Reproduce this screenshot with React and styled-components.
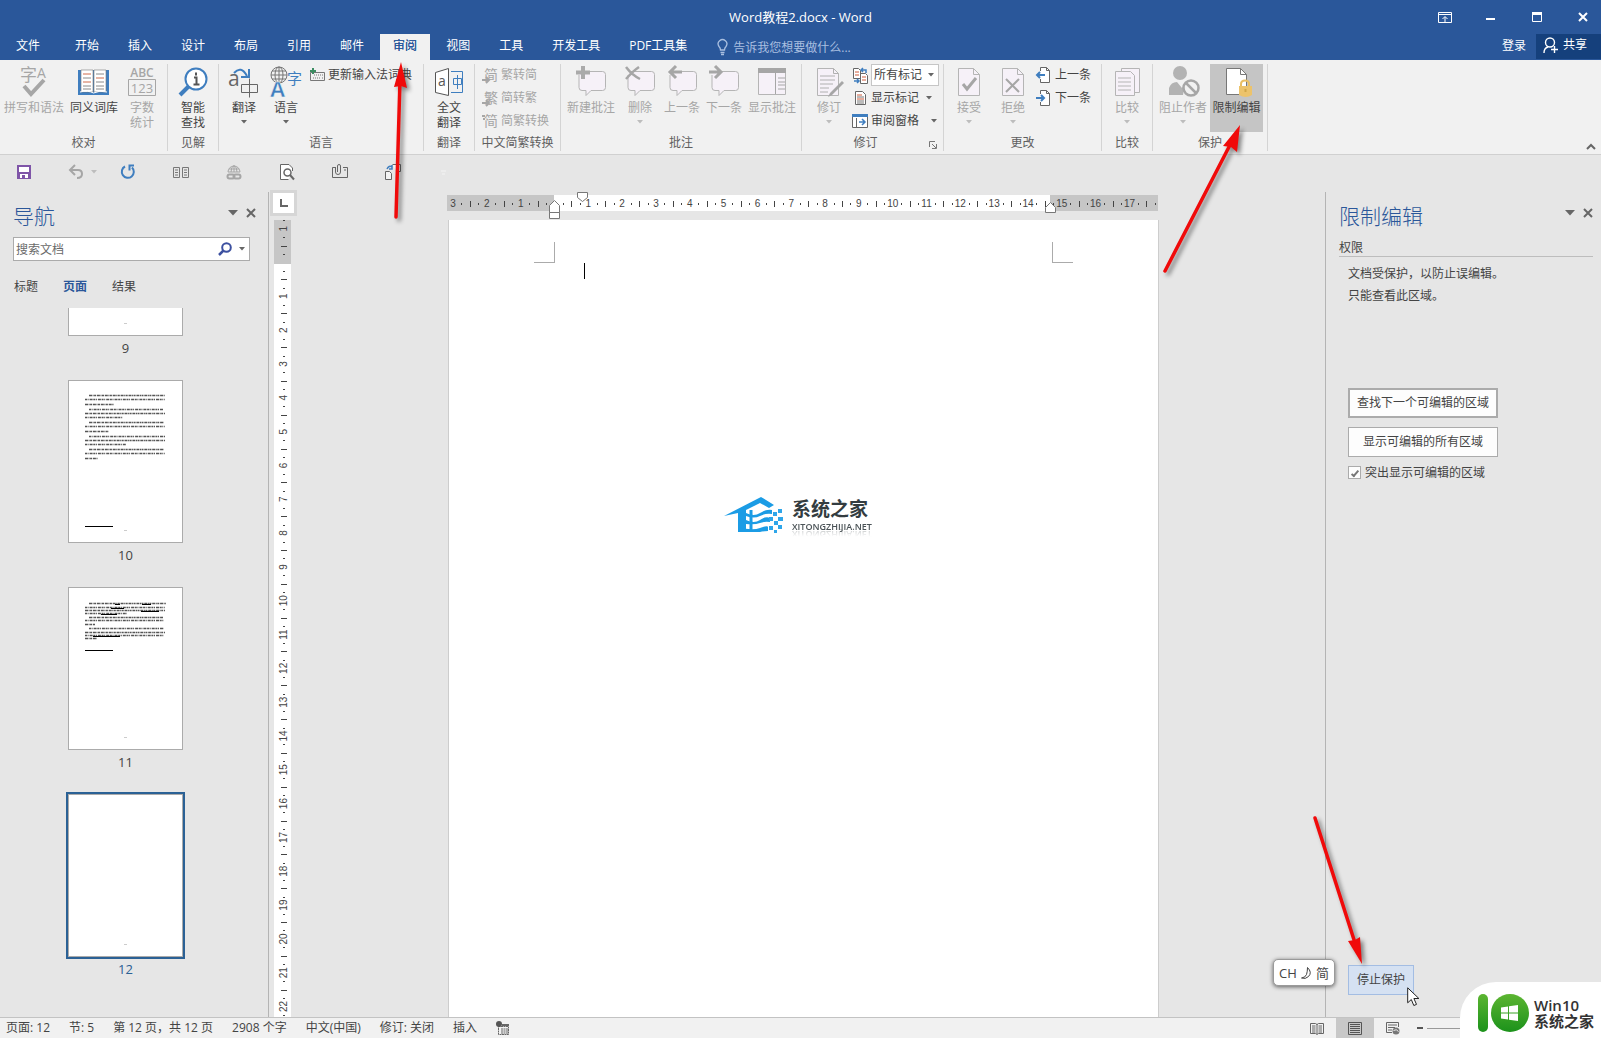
import React from "react";
import styled, { createGlobalStyle, css } from "styled-components";

const Global = createGlobalStyle`
  *, *::before, *::after { box-sizing: border-box; }
  body {
    margin: 0;
    background: #e6e6e6;
    color: #444;
    font: 12px/16px "Open Sans", "Noto Sans CJK SC", sans-serif;
    overflow: hidden;
  }
  button, input, select {
    font: inherit;
    color: inherit;
    margin: 0;
    padding: 0;
    border: 0;
    background: none;
  }
  svg { display: block; flex: none; overflow: visible; }
`;

const BLUE = "#2a579a";
const ACCENT = "#3f7ebf";
const MUTED = "#a6a6a6";

/* ---------- window frame ---------- */

const Window = styled.div`
  position: relative;
  display: flex;
  flex-direction: column;
  height: 100vh;
  overflow: hidden;
`;

const TitleBar = styled.header`
  display: grid;
  grid-template-columns: 1fr auto 1fr;
  align-items: center;
  height: 34px;
  background: ${BLUE};
  color: #fff;
`;

const Title = styled.h1`
  grid-column: 2;
  margin: 0;
  font-size: 13px;
  line-height: 20px;
  font-weight: 400;
`;

const WindowButtons = styled.div`
  display: flex;
  justify-content: flex-end;
  gap: 10px;
`;

const WindowButton = styled.button`
  display: grid;
  place-items: center;
  width: 36px;
  height: 32px;
`;

const TabRow = styled.nav`
  display: flex;
  gap: 3px;
  height: 26px;
  background: ${BLUE};
  color: #fff;
`;

const Tab = styled.button`
  padding: 0 13px 2px;
  white-space: nowrap;
  line-height: 20px;
  ${(p) => p.$file && css`padding: 0 19px 2px 16px;`}
  ${(p) => p.$active && css`
    background: #f1f1f1;
    color: ${BLUE};
    text-shadow: 0 0 0 ${BLUE};
  `}
`;

const TellMe = styled.label`
  display: flex;
  align-items: center;
  gap: 5px;
  flex: 1;
  padding-left: 14px;
  color: #a9bfe0;
  input { width: 200px; height: 22px; }
  input::placeholder { color: #a9bfe0; opacity: 1; }
`;

const SignIn = styled.button`
  padding: 0 7px 2px;
  line-height: 20px;
`;

const Share = styled.button`
  display: flex;
  align-items: center;
  gap: 5px;
  height: 25px;
  padding: 0 14px 3px 7px;
  background: #15407c;
`;

/* ---------- ribbon ---------- */

const Ribbon = styled.section`
  display: flex;
  height: 95px;
  padding-top: 4px;
  background: #f1f1f1;
  border-bottom: 1px solid #d0d0d0;
`;

const Group = styled.div`
  display: flex;
  flex-direction: column;
  height: 87px;
  border-right: 1px solid #d4d4d4;
`;

const GroupBody = styled.div`
  display: flex;
  flex: 1;
  padding: 0 ${(p) => p.$right}px 0 ${(p) => p.$left}px;
`;

const GroupLabel = styled.div`
  display: flex;
  height: 16px;
  line-height: 16px;
  color: #5f5f5f;
  span { flex: 1; text-align: center; white-space: nowrap; }
`;

const BigButton = styled.button`
  display: flex;
  flex-direction: column;
  align-items: center;
  width: ${(p) => p.$w}px;
  height: 68px;
  padding-top: 2px;
  line-height: 15px;
  white-space: nowrap;
  color: ${(p) => (p.disabled ? MUTED : "#444")};
  background: ${(p) => (p.$pressed ? "#c5c5c5" : "none")};
  > svg:first-child { margin-bottom: 2px; }
  > svg:last-child { margin-top: 5px; }
`;

const Stack = styled.div`
  display: flex;
  flex-direction: column;
  gap: 1px;
  padding-left: ${(p) => p.$inset || 0}px;
`;

const SmallButton = styled.button`
  display: flex;
  align-items: center;
  gap: 3px;
  height: 22px;
  white-space: nowrap;
  color: ${(p) => (p.disabled ? MUTED : "#444")};
  > svg:last-child:not(:first-child) { margin-left: ${(p) => p.$arrowGap || 4}px; }
`;

const MarkupRow = styled.label`
  display: flex;
  align-items: center;
  gap: 2px;
  height: 22px;
`;

const SelectBox = styled.span`
  display: flex;
  align-items: center;
  width: 68px;
  height: 22px;
  padding: 0 4px 0 2px;
  background: #fff;
  border: 1px solid #c6c6c6;
  select {
    flex: 1;
    width: 50px;
    appearance: none;
    outline: 0;
  }
`;

const Launcher = styled.button`
  width: 14px;
  padding-top: 4px;
`;

const Collapse = styled.button`
  align-self: flex-end;
  margin: 0 5px 4px auto;
`;

const QuickAccess = styled.div`
  display: flex;
  align-items: center;
  gap: 37px;
  height: 33px;
  padding-left: 16px;
`;

const QuickButton = styled.button`
  display: flex;
  width: 16px;
  height: 16px;
`;

const UndoGroup = styled.div`
  display: flex;
  align-items: center;
  gap: 8px;
  width: 14px;
`;

/* ---------- panes ---------- */

const Main = styled.main`
  display: flex;
  flex: 1;
  min-height: 0;
  padding-top: 4px;
`;

const NavPane = styled.aside`
  display: flex;
  flex-direction: column;
  flex: 0 0 269px;
  padding: 10px 12px 0 13px;
  border-right: 1px solid #b4b4b4;
  overflow: hidden;
`;

const PaneHeader = styled.div`
  display: flex;
  align-items: center;
  height: 28px;
  flex: none;
`;

const PaneTitle = styled.h2`
  flex: 1;
  margin: 0;
  font-size: 21px;
  line-height: 28px;
  font-weight: 300;
  color: #2b579a;
`;

const PaneTools = styled.div`
  display: flex;
  align-items: center;
  gap: 8px;
  padding-bottom: 6px;
`;

const Search = styled.label`
  display: flex;
  align-items: center;
  flex: none;
  gap: 7px;
  height: 24px;
  width: 237px;
  margin-top: 7px;
  padding: 0 4px 0 2px;
  background: #fff;
  border: 1px solid #ababab;
  input { flex: 1; min-width: 0; height: 20px; outline: 0; }
  input::placeholder { color: #6a6a6a; opacity: 1; }
`;

const NavTabs = styled.div`
  display: flex;
  flex: none;
  gap: 25px;
  margin-top: 18px;
  padding-left: 1px;
`;

const NavTab = styled.button`
  height: 16px;
  color: ${(p) => (p.$active ? "#2b579a" : "#444")};
  font-weight: ${(p) => (p.$active ? 700 : 400)};
`;

const Thumbs = styled.ol`
  display: flex;
  flex-direction: column;
  align-items: center;
  gap: 24px;
  width: 225px;
  margin: 13px 0 0;
  padding: 0;
  list-style: none;
`;

const Thumb = styled.li`
  display: flex;
  flex-direction: column;
  align-items: center;
  gap: 4px;
  font-size: 13px;
  color: ${(p) => (p.$selected ? "#2b6195" : "#444")};
`;

const Sheet = styled.div`
  width: 115px;
  height: ${(p) => (p.$cut ? 28 : 163)}px;
  background: #fff;
  border: 1px solid #ababab;
  ${(p) => p.$cut && css`border-top: 0;`}
  ${(p) => p.$selected && css`outline: 2px solid #2b6195;`}
`;

const RulerColumn = styled.div`
  display: flex;
  flex-direction: column;
  align-items: flex-start;
  flex: 0 0 29px;
  gap: 7px;
  padding: 1px 0 0 4px;
  overflow: clip;
  overflow-clip-margin: 4px;
`;

const TabStop = styled.button`
  display: grid;
  place-items: center;
  flex: none;
  width: 21px;
  height: 20px;
  background: #fff;
  box-shadow: 0 0 0 3px #d6d6d6;
`;

const VerticalScale = styled.div`
  flex: 1;
  min-height: 0;
  width: 17px;
  margin-left: 1px;
  background: #fff;
  overflow: hidden;
`;

const Canvas = styled.section`
  display: flex;
  justify-content: center;
  flex: 1;
  min-width: 0;
  padding-right: 16px;
`;

const PageColumn = styled.div`
  display: flex;
  flex-direction: column;
  width: 711px;
`;

const Page = styled.article`
  flex: 1;
  padding-top: 22px;
  background: #fff;
  border: solid #cdcdcd;
  border-width: 0 1px;
`;

const Corners = styled.div`
  display: flex;
  justify-content: space-between;
  padding: 0 85px;
`;

const Corner = styled.i`
  width: 21px;
  height: 21px;
  border-bottom: 1px solid #ababab;
  ${(p) => (p.$right ? css`border-left: 1px solid #ababab;` : css`border-right: 1px solid #ababab;`)}
`;

const Caret = styled.div`
  width: 1px;
  height: 16px;
  margin-left: 135px;
  background: #000;
`;

const Watermark = styled.figure`
  display: flex;
  align-items: flex-start;
  gap: 8px;
  margin: 217px 0 0 275px;
`;

const WatermarkText = styled.figcaption`
  display: flex;
  flex-direction: column;
  gap: 1px;
  strong { font: 700 19px/24px "Noto Sans CJK SC", sans-serif; color: #333c40; }
  small {
    font: 600 9px/11px "Open Sans", sans-serif;
    color: #4b5357;
    -webkit-box-reflect: below -3px linear-gradient(transparent 30%, rgba(0, 0, 0, 0.35));
  }
`;

const RestrictPane = styled.aside`
  display: flex;
  flex-direction: column;
  flex: 0 0 276px;
  padding: 10px 8px 22px 13px;
  border-left: 1px solid #b4b4b4;
`;

const SectionTitle = styled.h3`
  margin: 10px 0 0;
  font-size: 12px;
  line-height: 16px;
  font-weight: 400;
  border-bottom: 1px solid #bdbdbd;
`;

const SectionBody = styled.div`
  display: flex;
  flex-direction: column;
  align-items: flex-start;
  flex: 1;
  padding: 6px 9px 0;
  p { margin: 0; line-height: 22px; }
`;

const PaneActions = styled.div`
  display: flex;
  flex-direction: column;
  gap: 9px;
  margin: 81px 0 auto;
`;

const PaneButton = styled.button`
  width: 150px;
  height: 30px;
  background: #fdfdfd;
  border: ${(p) => (p.$focus ? 2 : 1)}px solid #ababab;
`;

const StopButton = styled.button`
  width: 66px;
  height: 30px;
  background: #d5e1f2;
  border: 1px solid #a3bde3;
`;

const Check = styled.label`
  display: flex;
  align-items: center;
  gap: 4px;
  height: 13px;
  input {
    appearance: none;
    display: grid;
    place-items: center;
    width: 13px;
    height: 13px;
    background: #fdfdfd;
    border: 1px solid #ababab;
  }
  input:checked::after {
    content: "";
    width: 4px;
    height: 8px;
    border: solid #777;
    border-width: 0 2px 2px 0;
    transform: rotate(40deg);
  }
`;

/* ---------- status bar ---------- */

const StatusBar = styled.footer`
  display: flex;
  align-items: center;
  flex: none;
  height: 21px;
  padding: 0 10px 0 6px;
  background: #f1f1f1;
  border-top: 1px solid #c3c3c3;
  white-space: nowrap;
`;

const StatusItems = styled.div`
  display: flex;
  align-items: center;
  flex: 1;
  gap: 19px;
`;

const ViewButton = styled.button`
  display: grid;
  place-items: center;
  width: 38px;
  height: 20px;
  background: ${(p) => (p.$active ? "#c8c8c8" : "none")};
`;

const Zoom = styled.label`
  display: flex;
  align-items: center;
  gap: 4px;
  width: 179px;
  padding-left: 5px;
  input {
    appearance: none;
    width: 120px;
    height: 1px;
    background: #999;
  }
  input::-webkit-slider-thumb {
    appearance: none;
    width: 5px;
    height: 11px;
    background: #666;
  }
`;

/* ---------- floating pieces ---------- */

const Annotations = styled.svg`
  position: absolute;
  inset: 0;
  width: 100%;
  height: 100%;
  pointer-events: none;
  filter: drop-shadow(3px 3px 2px rgba(0, 0, 0, 0.45));
`;

const ImeBar = styled.div`
  position: absolute;
  right: 266px;
  bottom: 52px;
  display: flex;
  align-items: center;
  justify-content: center;
  gap: 4px;
  width: 62px;
  height: 27px;
  font-size: 13px;
  background: #fff;
  border: 1px solid #9a9a9a;
  border-radius: 5px;
  box-shadow: 0 1px 4px rgba(0, 0, 0, 0.6);
`;

const Pointer = styled.svg`
  position: absolute;
  right: 181px;
  bottom: 31px;
`;

const Brand = styled.div`
  position: absolute;
  right: 0;
  bottom: 0;
  display: flex;
  align-items: center;
  gap: 5px;
  width: 141px;
  height: 56px;
  padding: 6px 0 0 17px;
  background: #fff;
  border-top-left-radius: 36px;
  color: #333;
`;

const BrandText = styled.div`
  display: flex;
  flex-direction: column;
  font: 600 15px/16px "Open Sans", "Noto Sans CJK SC", sans-serif;
  white-space: nowrap;
  strong { display: block; font-weight: 600; }
`;

/* ---------- icons ---------- */

const Svg = ({ w = 32, h = w, children, ...rest }) => (
  <svg width={w} height={h} viewBox={`0 0 ${w} ${h}`} fill="none" aria-hidden="true" {...rest}>
    {children}
  </svg>
);

const CJK = '"Noto Sans CJK SC", sans-serif';
const LATIN = '"Open Sans", sans-serif';

const Arrow = ({ muted }) => (
  <Svg w={6} h={4}><path d="M0 0h6L3 3.5z" fill={muted ? "#bdbdbd" : "#666"} /></Svg>
);

const PaneArrow = () => <Svg w={10} h={6}><path d="M0 0h10L5 5.5z" fill="#666" /></Svg>;
const Cross = ({ color = "#666", size = 10 }) => (
  <Svg w={size}><path d={`M1 1l${size - 2} ${size - 2}M${size - 1} 1L1 ${size - 1}`} stroke={color} strokeWidth="2" /></Svg>
);

const SpellIcon = () => (
  <Svg>
    <text x="2" y="15" fontSize="17" fontFamily={CJK} fill={MUTED}>字</text>
    <text x="19" y="12" fontSize="14" fontFamily={LATIN} fill={MUTED}>A</text>
    <path d="M6 20l7 8L26 14" stroke={MUTED} strokeWidth="4" />
  </Svg>
);
const ThesaurusIcon = () => (
  <Svg>
    <path d="M0 4h31v25H0z" fill={ACCENT} />
    <path d="M3 4h12v22H3zM16 4h12v22H16z" fill="#fff" stroke="#777" strokeWidth=".6" />
    <path d="M2 26q8-2 13.500 1q6-3 13.500-1" stroke="#fff" />
    <path d="M5 8h8M5 16h8M18 12h8" stroke="#cf6a4a" />
    <path d="M5 12h8M5 20h8M5 23h8M18 8h8M18 16h8M18 20h8M18 23h8" stroke="#8a8a8a" />
  </Svg>
);
const CountIcon = () => (
  <Svg>
    <text x="16" y="11" fontSize="12" fontWeight="600" textAnchor="middle" fontFamily={LATIN} fill={MUTED}>ABC</text>
    <path d="M2.500 13.500h27v16h-27z" stroke={MUTED} />
    <text x="16" y="27" fontSize="13" textAnchor="middle" fontFamily={LATIN} fill={MUTED}>123</text>
  </Svg>
);
const SmartIcon = () => (
  <Svg>
    <circle cx="19" cy="13" r="10.500" fill="#fff" stroke={ACCENT} strokeWidth="2" />
    <path d="M11.500 20.500L3 29" stroke={ACCENT} strokeWidth="4" />
    <path d="M19 6.500v3M17 11.500h2.500V18M16.500 18.500h6" stroke="#555" strokeWidth="2" />
  </Svg>
);
const TranslateIcon = () => (
  <Svg>
    <text x="0" y="20" fontSize="21" fontFamily={LATIN} fill="#666">a</text>
    <path d="M13.500 18.500h16v8h-16zM21.500 12.500v19" stroke="#666" />
    <path d="M6 7q7-8 13 3" stroke={ACCENT} strokeWidth="2" />
    <path d="M21 3v8h-8" stroke={ACCENT} strokeWidth="2" />
  </Svg>
);
const LanguageIcon = () => (
  <Svg>
    <g stroke="#777"><circle cx="9" cy="9" r="8" /><ellipse cx="9" cy="9" rx="4" ry="8" /><path d="M1 9h16M2 5h14M2 13h14M9 1v16" /></g>
    <text x="17" y="18" fontSize="15" fontFamily={CJK} fill={ACCENT}>字</text>
    <text x="0" y="31" fontSize="22" fontWeight="700" fontFamily={LATIN} fill={ACCENT} stroke="#f1f1f1" strokeWidth=".6">A</text>
  </Svg>
);
const FullTranslateIcon = () => (
  <Svg>
    <path d="M2.500 6.500L15.500 2.500v27L2.500 26.500z" stroke="#555" fill="#fff" />
    <text x="5" y="20" fontSize="14" fontFamily={LATIN} fill="#555">a</text>
    <path d="M18 5.500h11.500v21H18M20.500 12.500h8v6h-8zM24.500 9v14" stroke={ACCENT} />
  </Svg>
);
const bubble = "M5.500 5.500h22q3 0 3 3v13q0 3-3 3H16l-5 5v-5H7q-3 0-3-3V9";
const CommentIcon = ({ kind }) => (
  <Svg>
    <path d={bubble} stroke="#b5b5b5" fill="#f6f1f8" />
    {kind === "new" && <path d="M8 0v13M1 6.500h14" stroke="#aaa" strokeWidth="4" />}
    {kind === "delete" && <path d="M2 1q6 8 14 12M15 1Q9 5 2 13" stroke={MUTED} strokeWidth="2.500" />}
    {kind === "prev" && <path d="M16 6H5M10 0L4 6l6 6" stroke={MUTED} strokeWidth="3" />}
    {kind === "next" && <path d="M1 6h11M7 0l6 6-6 6" stroke={MUTED} strokeWidth="3" />}
  </Svg>
);
const ShowCommentsIcon = () => (
  <Svg>
    <path d="M2.500 2.500h27v26h-27z" stroke="#b5b5b5" fill="#f6f1f8" />
    <path d="M2 2h28v5H2z" fill={MUTED} />
    <path d="M19.500 7v21M22 12h7M22 16h7M22 19h7M22 23h7" stroke={MUTED} />
  </Svg>
);
const TrackIcon = () => (
  <Svg>
    <path d="M4.500 2.500h16l5 5v22h-21z" fill="#f6f1f8" stroke="#b5b5b5" />
    <path d="M20.500 2.500v5h5M7 10h15M7 14h15M7 18h13M7 22h9M7 26h8" stroke="#b0b0b0" />
    <path d="M29 15L17 27l-2 4 4-2 12-12z" fill={MUTED} />
  </Svg>
);
const DecisionIcon = ({ no }) => (
  <Svg>
    <path d="M5.500 2.500h15l6 6v21h-21z" fill="#f6f1f8" stroke="#b5b5b5" />
    <path d="M20.500 2.500v6h6" stroke="#b5b5b5" />
    {no ? <path d="M9 13l13 13M22 13L9 26" stroke={MUTED} strokeWidth="2" /> : <path d="M10 18l4 5 9-11" stroke={MUTED} strokeWidth="3" />}
  </Svg>
);
const CompareIcon = () => (
  <Svg>
    <path d="M10.500 2.500h18v24h-18z" stroke="#b5b5b5" fill="#f6f1f8" />
    <path d="M4.500 5.500h15l4 4v20h-19z" stroke="#b5b5b5" fill="#f6f1f8" />
    <path d="M7 12h13M7 16h13M7 20h13M7 24h13" stroke="#b5b5b5" />
  </Svg>
);
const BlockIcon = () => (
  <Svg>
    <circle cx="13" cy="7" r="7" fill="#b3b3b3" />
    <path d="M2 29V22q2-6 8-6l5 6 3-5-2 12z" fill="#b3b3b3" />
    <circle cx="24" cy="22" r="7.500" fill="#f1f1f1" stroke={MUTED} strokeWidth="2.500" />
    <path d="M19 17l10 10" stroke={MUTED} strokeWidth="2.500" />
  </Svg>
);
const RestrictIcon = () => (
  <Svg>
    <path d="M5.500 2.500h14l6 6v20h-20z" fill="#fff" stroke="#777" />
    <path d="M19.500 2.500v6h6" stroke="#777" />
    <path d="M20 22v-4q0-3.500 4-3.500t4 3.500v4" stroke="#e8be63" strokeWidth="2" />
    <path d="M18 20h13v9q-6 4-13 0z" fill="#ecc36b" />
    <path d="M24.500 23v3" stroke="#d0a64a" strokeWidth="2" />
  </Svg>
);

const KeyboardIcon = () => (
  <Svg w={16}>
    <path d="M1.500 5.500h14v8h-14z" stroke="#777" />
    <path d="M5 8h9M4 11h1M6 11h6M13 11h1" stroke="#777" strokeDasharray="1 1" />
    <path d="M4 1v6M1 4h6" stroke="#3c8d62" strokeWidth="2" />
  </Svg>
);
const ConvertIcon = ({ glyph, kind }) => (
  <Svg w={16}>
    <text x="2" y="13" fontSize="14" fontFamily={CJK} fill={MUTED}>{glyph}</text>
    {kind === "both" ? <path d="M0 3h3M1 6h2" stroke={MUTED} strokeWidth="2" /> : <path d="M0 13h6M4 10l3 3-3 3" stroke={MUTED} strokeWidth="2" />}
  </Svg>
);
const MarkupIcon = () => (
  <Svg w={17}>
    <path d="M1.500 1.500h5l2 2v8h-7zM8.500 6.500h5l2 2v8h-7z" fill="#fff" stroke="#666" />
    <path d="M3 5h4M3 8h4M10 10h4M10 13h4" stroke="#cf5a3a" />
    <path d="M10 3h4v3M2 14h4M11 1L9 3l2 2M5 12l2 2-2 2" stroke={ACCENT} strokeWidth="1.500" />
  </Svg>
);
const ShowMarkupIcon = () => (
  <Svg w={16}>
    <path d="M3.500 1.500h7l3 3v10h-10z" fill="#fff" stroke="#666" />
    <path d="M5 5h5M5 9h7" stroke="#cf5a3a" />
    <path d="M5 7h7M5 11h7M5 13h7" stroke="#777" />
  </Svg>
);
const PaneIcon = () => (
  <Svg w={16}>
    <path d="M.5 1.500h15v13H.5z" fill="#fff" stroke="#666" />
    <path d="M0 1h16v3H0z" fill={ACCENT} />
    <path d="M4.500 5v9" stroke="#666" />
    <path d="M7 9h6M10 6l3 3-3 3" stroke={ACCENT} strokeWidth="1.500" />
  </Svg>
);
const StepIcon = ({ next }) => (
  <Svg w={16}>
    <path d="M4.500 4V.5h6l3 3v12h-9V12" fill="#fff" stroke="#666" />
    <path d="M10.500.5v3h3" stroke="#666" />
    {next ? <path d="M0 8h7M5 5l3 3-3 3" stroke={ACCENT} strokeWidth="2" /> : <path d="M9 8H2M4 5L1 8l3 3" stroke={ACCENT} strokeWidth="2" />}
  </Svg>
);

/* ---------- rulers ---------- */

const STEP = 33.82;

function scaleMarks(from, to, zero) {
  const marks = [];
  for (let q = Math.ceil((from - zero) / (STEP / 4)); zero + (q * STEP) / 4 < to; q += 1) {
    if (q === 0) continue;
    const at = zero + (q * STEP) / 4;
    const kind = q % 4 === 0 ? "number" : q % 2 === 0 ? "bar" : "dot";
    marks.push({ at, kind, value: Math.abs(q / 4) });
  }
  return marks;
}

const RULER_TEXT = { fontSize: 10, fontFamily: '"Liberation Sans", sans-serif', fill: "#444", textAnchor: "middle" };

const HorizontalRuler = () => (
  <Svg w={711} h={28}>
    <path d="M-1 3h711v16H-1z" fill="#fff" />
    <path d="M-1 3h107v16H-1zM602 3h108v16H602z" fill="#c6c6c6" />
    {scaleMarks(2, 709, 106.500).map(({ at, kind, value }) =>
      kind === "number" ? (
        <text key={at} x={at} y="15" {...RULER_TEXT}>{value}</text>
      ) : (
        <path key={at} d={kind === "bar" ? `M${Math.round(at)}.5 9v6` : `M${Math.round(at)}.5 11v2`} stroke="#444" />
      )
    )}
    <g fill="#fff" stroke="#777">
      <path d="M129.500.5h10v5l-5 4-5-4z" />
      <path d="M101.500 20.500v-7l5-5 5 5v7zM101.500 20.500h10v6h-10z" />
      <path d="M597.500 20.500v-5l5-5 5 5v5z" />
    </g>
  </Svg>
);

const VerticalRuler = () => (
  <Svg w={17} h={2000}>
    <path d="M0 0h17v44H0z" fill="#c6c6c6" />
    {scaleMarks(0, 2000, 42.500).map(({ at, kind, value }) =>
      kind === "number" ? (
        <text key={at} transform={`translate(13 ${at}) rotate(-90)`} {...RULER_TEXT}>{value}</text>
      ) : (
        <path key={at} d={kind === "bar" ? `M7 ${Math.round(at)}.5h6` : `M9 ${Math.round(at)}.5h2`} stroke="#444" />
      )
    )}
  </Svg>
);

/* ---------- thumbnails ---------- */

const THUMB_LINES = {
  10: [[20, 14, 76], [16, 18, 80], [16, 23, 29], [20, 28, 74], [16, 32, 80], [16, 36, 38], [20, 41, 75], [16, 45, 80], [16, 50, 24], [20, 55, 76], [16, 59, 80], [16, 63, 41], [20, 68, 75], [16, 72, 80], [16, 77, 13]],
  11: [[20, 15, 77], [16, 19, 80], [16, 22, 80], [16, 25, 42], [20, 29, 74], [16, 32, 79], [16, 36, 10], [20, 40, 75], [16, 44, 80], [16, 47, 79], [16, 50, 12]],
};

const ThumbDrawing = ({ page }) => (
  <Svg w={113} h={page === 9 ? 27 : 161}>
    {(THUMB_LINES[page] || []).map(([x, y, w], i) => (
      <path key={y} d={`M${x} ${y}.5h${w}`} stroke="#555" strokeWidth="1.500" strokeDasharray={i % 2 ? "2 .6 1 1 3 .7" : "3 .6 1 .5 2 .8"} />
    ))}
    {page === 10 && <path d="M16 145.500h28" stroke="#000" />}
    {page === 11 && <path d="M16 62.500h28M46 16.500h5M73 16.500h9M42 20.500h13M72 23.500h18M32 26.500h16M24 48.500h27" stroke="#000" />}
    <path d={`M55 ${page === 9 ? 15 : 149}.5h3`} stroke="#ccc" />
  </Svg>
);

/* ---------- composition ---------- */

const Big = ({ icon, lines, w, arrow, disabled, pressed }) => (
  <BigButton $w={w} disabled={disabled} $pressed={pressed}>
    {icon}
    {lines.map((line) => <span key={line}>{line}</span>)}
    {arrow && <Arrow muted={disabled} />}
  </BigButton>
);

const RibbonGroup = ({ label, left = 0, right = 0, launcher, children }) => (
  <Group>
    <GroupBody $left={left} $right={right}>{children}</GroupBody>
    <GroupLabel>
      <span>{label}</span>
      {launcher && (
        <Launcher aria-label="修订选项">
          <Svg w={8}><path d="M.5 6V.5H6M3 3l4 4M7.500 3v4.500H3" stroke="#777" /></Svg>
        </Launcher>
      )}
    </GroupLabel>
  </Group>
);

const TABS = ["文件", "开始", "插入", "设计", "布局", "引用", "邮件", "审阅", "视图", "工具", "开发工具", "PDF工具集"];
const STATUS = ["页面: 12", "节: 5", "第 12 页，共 12 页", "2908 个字", "中文(中国)", "修订: 关闭", "插入"];

const QUICK = [
  ["自动恢复", <path key="r" d="M5 2.500A6 6 0 1 0 12 3.500M14 1.500H9.500v5" stroke={ACCENT} strokeWidth="2" />],
  ["阅读", <path key="b" d="M.5 3.500h6v10h-6zM9.500 3.500h6v10h-6zM2 6h3M2 8.500h3M2 11h3M11 6h3M11 8.500h3M11 11h3" stroke="#777" />],
  ["超链接", <g key="l" stroke={MUTED}><path d="M2 8a6 6 0 0 1 12 0zM8 1.500V8M5 8q0-5 3-6.500Q11 3 11 8M3 5h10" /><rect x="1.500" y="10.500" width="7" height="4" rx="2" strokeWidth="2" /><rect x="7.500" y="10.500" width="7" height="4" rx="2" strokeWidth="2" /></g>],
  ["打印预览", <g key="p" stroke="#666"><path d="M13.500 7V4L10 .5H1.500v15h8" fill="#fff" /><circle cx="8.500" cy="8.500" r="3.500" strokeWidth="1.500" /><path d="M11 11l4 4.500" strokeWidth="2" /></g>],
  ["附件", <g key="a" stroke="#666"><path d="M3 3.500H.5v10h15v-10H11M12 6h2" /><path d="M3.500 3v5a2 2 0 0 0 5 0V2a1.500 1.500 0 0 0-3 0v6" /></g>],
  ["转换", <g key="t"><path d="M.5 7.500h4l2 2v6h-6zM7.500.5h8v7h-4" stroke="#666" fill="#f4f4f4" /><path d="M2 5q2-4 5-2M7 1v4H4" stroke={ACCENT} strokeWidth="1.500" /></g>],
];

export default function App() {
  return (
    <Window>
      <Global />
      <TitleBar>
        <Title>Word教程2.docx - Word</Title>
        <WindowButtons>
          <WindowButton aria-label="功能区显示选项"><Svg w={14} h={11}><path d="M.5.5h13v10H.5zM1 2.500h12M7 10V5M4.500 7L7 4.500 9.500 7" stroke="#fff" /></Svg></WindowButton>
          <WindowButton aria-label="最小化"><Svg w={10}><path d="M0 7h9" stroke="#fff" strokeWidth="2" /></Svg></WindowButton>
          <WindowButton aria-label="最大化"><Svg w={10}><path d="M.5 1.500h9v8h-9zM0 1h10" stroke="#fff" /><path d="M0 0h10v3H0z" fill="#fff" /></Svg></WindowButton>
          <WindowButton aria-label="关闭"><Cross color="#fff" /></WindowButton>
        </WindowButtons>
      </TitleBar>

      <TabRow>
        {TABS.map((tab, i) => <Tab key={tab} $file={i === 0} $active={tab === "审阅"}>{tab}</Tab>)}
        <TellMe>
          <Svg w={11} h={16}><path d="M3.500 11q0-2-1.500-3.500a4.300 4.300 0 1 1 7 0Q7.500 9 7.500 11zM3.500 13.500h4M4 15.500h3" stroke="#a9bfe0" strokeWidth="1.300" /></Svg>
          <input aria-label="告诉我" placeholder="告诉我您想要做什么..." />
        </TellMe>
        <SignIn>登录</SignIn>
        <Share>
          <Svg w={15} h={17}><circle cx="7" cy="5.500" r="4.500" stroke="#fff" strokeWidth="1.400" /><path d="M1 16q0-5 4-6M8 12.500h7M11.500 9v7" stroke="#fff" strokeWidth="1.400" /></Svg>
          共享
        </Share>
      </TabRow>

      <Ribbon>
        <RibbonGroup label="校对" left={2} right={5}>
          <Big icon={<SpellIcon />} lines={["拼写和语法"]} w={64} disabled />
          <Big icon={<ThesaurusIcon />} lines={["同义词库"]} w={56} />
          <Big icon={<CountIcon />} lines={["字数", "统计"]} w={40} disabled />
        </RibbonGroup>
        <RibbonGroup label="见解">
          <Big icon={<SmartIcon />} lines={["智能", "查找"]} w={50} />
        </RibbonGroup>
        <RibbonGroup label="语言" left={4} right={11}>
          <Big icon={<TranslateIcon />} lines={["翻译"]} w={42} arrow />
          <Big icon={<LanguageIcon />} lines={["语言"]} w={42} arrow />
          <Stack $inset={2}>
            <SmallButton><KeyboardIcon />更新输入法词典</SmallButton>
          </Stack>
        </RibbonGroup>
        <RibbonGroup label="翻译">
          <Big icon={<FullTranslateIcon />} lines={["全文", "翻译"]} w={50} />
        </RibbonGroup>
        <RibbonGroup label="中文简繁转换" left={7} right={11}>
          <Stack>
            <SmallButton disabled><ConvertIcon glyph="简" />繁转简</SmallButton>
            <SmallButton disabled><ConvertIcon glyph="繁" />简转繁</SmallButton>
            <SmallButton disabled><ConvertIcon glyph="简" kind="both" />简繁转换</SmallButton>
          </Stack>
        </RibbonGroup>
        <RibbonGroup label="批注" left={2} right={2}>
          <Big icon={<CommentIcon kind="new" />} lines={["新建批注"]} w={56} disabled />
          <Big icon={<CommentIcon kind="delete" />} lines={["删除"]} w={42} arrow disabled />
          <Big icon={<CommentIcon kind="prev" />} lines={["上一条"]} w={42} disabled />
          <Big icon={<CommentIcon kind="next" />} lines={["下一条"]} w={42} disabled />
          <Big icon={<ShowCommentsIcon />} lines={["显示批注"]} w={54} disabled />
        </RibbonGroup>
        <RibbonGroup label="修订" left={4} right={4} launcher>
          <Big icon={<TrackIcon />} lines={["修订"]} w={46} arrow disabled />
          <Stack>
            <MarkupRow>
              <MarkupIcon />
              <SelectBox>
                <select aria-label="显示以供审阅"><option>所有标记</option></select>
                <Arrow />
              </SelectBox>
            </MarkupRow>
            <SmallButton><ShowMarkupIcon />显示标记<Arrow /></SmallButton>
            <SmallButton $arrowGap={9}><PaneIcon />审阅窗格<Arrow /></SmallButton>
          </Stack>
        </RibbonGroup>
        <RibbonGroup label="更改" left={4} right={10}>
          <Big icon={<DecisionIcon />} lines={["接受"]} w={42} arrow disabled />
          <Big icon={<DecisionIcon no />} lines={["拒绝"]} w={46} arrow disabled />
          <Stack>
            <SmallButton><StepIcon />上一条</SmallButton>
            <SmallButton><StepIcon next />下一条</SmallButton>
          </Stack>
        </RibbonGroup>
        <RibbonGroup label="比较">
          <Big icon={<CompareIcon />} lines={["比较"]} w={50} arrow disabled />
        </RibbonGroup>
        <RibbonGroup label="保护" left={3} right={4}>
          <Big icon={<BlockIcon />} lines={["阻止作者"]} w={54} arrow disabled />
          <Big icon={<RestrictIcon />} lines={["限制编辑"]} w={53} pressed />
        </RibbonGroup>
        <Collapse aria-label="折叠功能区"><Svg w={10} h={7}><path d="M1 6l4-4 4 4" stroke="#666" strokeWidth="2" /></Svg></Collapse>
      </Ribbon>

      <QuickAccess>
        <QuickButton aria-label="保存">
          <Svg w={16}><path d="M1 1h14v14H1z" fill="#7f55a8" /><path d="M3 3h10v5H3zM4 10h8v4H4z" fill="#fff" /><path d="M6 11h3v4H6z" fill="#7f55a8" /></Svg>
        </QuickButton>
        <UndoGroup>
          <QuickButton aria-label="撤消"><Svg w={14} h={16}><path d="M1 6h8q4 0 4 4t-5 4M6 1L1 6l5 5" stroke={MUTED} strokeWidth="2" /></Svg></QuickButton>
          <Arrow muted />
        </UndoGroup>
        {QUICK.map(([name, art]) => <QuickButton key={name} aria-label={name}><Svg w={16}>{art}</Svg></QuickButton>)}
        <QuickButton aria-label="自定义快速访问工具栏"><Svg w={16}><path d="M3 7h5M4 10h3" stroke="#f4f4f4" strokeWidth="1" /></Svg></QuickButton>
      </QuickAccess>

      <Main>
        <NavPane>
          <PaneHeader>
            <PaneTitle>导航</PaneTitle>
            <PaneTools><PaneArrow /><Cross /></PaneTools>
          </PaneHeader>
          <Search>
            <input aria-label="搜索文档" placeholder="搜索文档" />
            <Svg w={14}><circle cx="8.500" cy="5.500" r="4.300" stroke="#3c50a0" strokeWidth="2" /><path d="M5.500 8.500L1 13" stroke="#3c50a0" strokeWidth="2.500" /></Svg>
            <Arrow />
          </Search>
          <NavTabs>
            {["标题", "页面", "结果"].map((t) => <NavTab key={t} $active={t === "页面"}>{t}</NavTab>)}
          </NavTabs>
          <Thumbs>
            {[9, 10, 11, 12].map((n) => (
              <Thumb key={n} $selected={n === 12}>
                <Sheet $cut={n === 9} $selected={n === 12}><ThumbDrawing page={n} /></Sheet>
                {n}
              </Thumb>
            ))}
          </Thumbs>
        </NavPane>

        <RulerColumn>
          <TabStop aria-label="制表符"><Svg w={8}><path d="M1 0v7h7" stroke="#666" strokeWidth="2" /></Svg></TabStop>
          <VerticalScale><VerticalRuler /></VerticalScale>
        </RulerColumn>

        <Canvas>
          <PageColumn>
            <HorizontalRuler />
            <Page>
              <Corners><Corner /><Corner $right /></Corners>
              <Caret />
              <Watermark>
                <Svg w={60} h={40}>
                  <path d="M0 20L37 1l13 8-5 3-9-5L22 14v22h-8V17z" fill="#1b9ce5" />
                  <path d="M22 17q8 4 14 0t12-3v4q-6-1-12 2t-14 0zM22 24q8 4 14 0t10-2v4q-5-1-10 1t-14 1zM14 31q14 4 22 1t8-1v4q-4 0-8 1H14z" fill="#1b9ce5" />
                  <path d="M27 14v22" stroke="#1b9ce5" strokeWidth="3" />
                  <path d="M49 16h4v4h-4zM54 13h4v4h-4zM45 21h4v4h-4zM54 21h5v4h-5zM50 25h4v4h-4zM45 30h4v4h-4zM54 29h4v4h-4zM50 34h3v3h-3z" fill="#2ea6ea" />
                </Svg>
                <WatermarkText>
                  <strong>系统之家</strong>
                  <small>XITONGZHIJIA.NET</small>
                </WatermarkText>
              </Watermark>
            </Page>
          </PageColumn>
        </Canvas>

        <RestrictPane>
          <PaneHeader>
            <PaneTitle>限制编辑</PaneTitle>
            <PaneTools><PaneArrow /><Cross /></PaneTools>
          </PaneHeader>
          <SectionTitle>权限</SectionTitle>
          <SectionBody>
            <p>文档受保护，以防止误编辑。</p>
            <p>只能查看此区域。</p>
            <PaneActions>
              <PaneButton $focus>查找下一个可编辑的区域</PaneButton>
              <PaneButton>显示可编辑的所有区域</PaneButton>
              <Check><input type="checkbox" defaultChecked />突出显示可编辑的区域</Check>
            </PaneActions>
            <StopButton>停止保护</StopButton>
          </SectionBody>
        </RestrictPane>
      </Main>

      <StatusBar>
        <StatusItems>
          {STATUS.map((s) => <span key={s}>{s}</span>)}
          <Svg w={13} h={14}><path d="M2.500 5.500h10v8h-10zM5 8h7M5 10h7M5 12h7" stroke="#666" strokeDasharray="2 0.500" /><path d="M6 3h7v2H6z" fill="#666" /><circle cx="3" cy="3" r="3" fill="#555" /></Svg>
        </StatusItems>
        <ViewButton aria-label="阅读视图"><Svg w={14} h={13}><path d="M.5 1.500h5l1.500 1 1.500-1h5v10h-5L7 12.500l-1.500-1h-5zM7 2v10M2 4h3.500M2 6h3.500M2 8h3.500M2 10h3.500M8.500 4H12M8.500 6H12M8.500 8H12M8.500 10H12" stroke="#666" /></Svg></ViewButton>
        <ViewButton $active aria-label="页面视图"><Svg w={14} h={13}><path d="M.5.5h13v12H.5zM2 2.500h10M2 4.500h10M2 6.500h10M2 8.500h10M2 10.500h10" stroke="#555" /></Svg></ViewButton>
        <ViewButton aria-label="Web 版式视图"><Svg w={14} h={13}><path d="M6 10.500H.5v-10h12V5M2 3h9M2 5.500h7M2 8h4" stroke="#666" /><circle cx="10" cy="9" r="3.500" fill="#777" /><path d="M7.500 8.500q3-2 5 1" stroke="#eee" /></Svg></ViewButton>
        <Zoom>
          <Svg w={6} h={2}><path d="M0 0h6v2H0z" fill="#555" /></Svg>
          <input type="range" aria-label="缩放" defaultValue="50" />
        </Zoom>
      </StatusBar>

      <Annotations aria-hidden="true">
        <g stroke="#f00a0a" strokeWidth="3.500" strokeLinecap="round">
          <path d="M396 217L400 80M1165 271L1230 145M1315 818L1356 946" />
        </g>
        <path d="M401 62l6 26-6-2-7 1zM1240 125l-3 27-6-5-8-1zM1362 964l-14-23 7-1 5-3z" fill="#f00a0a" />
      </Annotations>

      <ImeBar>
        CH
        <Svg w={11} h={12}><path d="M6.500.5q5 5 1 9-3 3-7 1.500 4-.5 5-3.500T6.500.5z" stroke="#444" /></Svg>
        简
      </ImeBar>

      <Pointer width="13" height="20" viewBox="0 0 13 20" aria-hidden="true">
        <path d="M.7.800v15l3.600-3.300 2.500 6 2.700-1.100-2.600-5.900h5z" fill="#fff" stroke="#222" />
      </Pointer>

      <Brand>
        <Svg w={52} h={40}>
          <defs>
            <linearGradient id="leaf" x1="0" y1="0" x2="0" y2="1"><stop offset="0" stopColor="#5cb531" /><stop offset="1" stopColor="#1c921b" /></linearGradient>
          </defs>
          <rect x="1" y="1" width="10" height="38" rx="5" fill="url(#leaf)" />
          <circle cx="33" cy="20" r="19" fill="url(#leaf)" />
          <path d="M24 14.500l7-1v6h-7zM32 13.300l9-1.300v7.500h-9zM24 20.500h7v6l-7-1zM32 20.500h9V28l-9-1.300z" fill="#fff" />
        </Svg>
        <BrandText><strong>Win10</strong><strong>系统之家</strong></BrandText>
      </Brand>
    </Window>
  );
}
